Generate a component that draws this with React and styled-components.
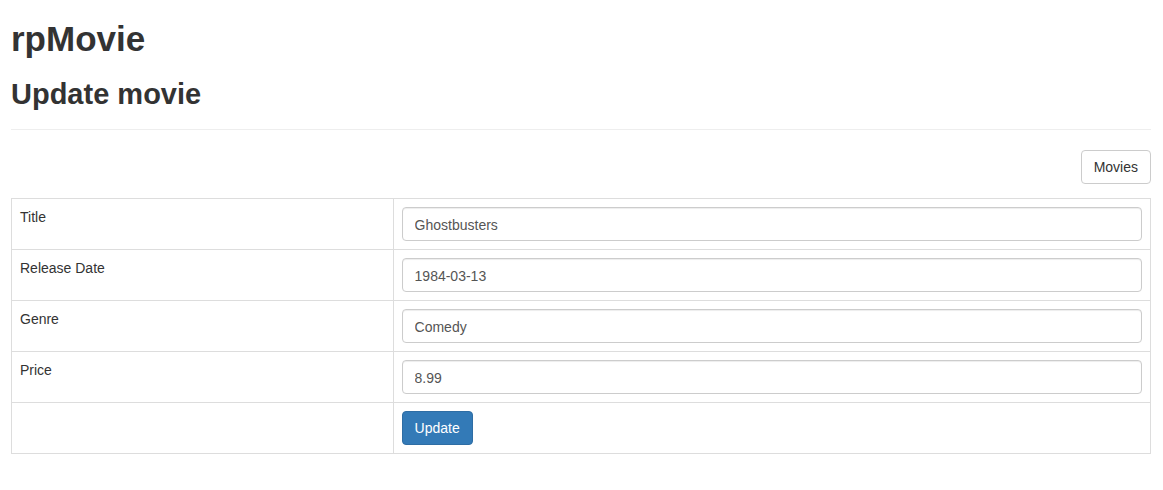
import React from 'react';
import styled, { createGlobalStyle } from 'styled-components';

const GlobalStyle = createGlobalStyle`
  html, body {
    margin: 0;
    padding: 0;
    background: #fff;
  }
  body {
    font-family: "Liberation Sans", Arial, sans-serif;
    font-size: 14px;
    line-height: 1.42857;
    color: #333;
  }
  * { box-sizing: border-box; }
`;

const Page = styled.div`
  padding: 0 12px 0 11px;
  overflow: hidden;
`;

const AppTitle = styled.h1`
  font-size: 35px;
  font-weight: bold;
  line-height: 1.1;
  margin: 20px 0 10px;
  color: #333;
`;

const PageTitle = styled.h2`
  font-size: 29px;
  font-weight: bold;
  line-height: 1.1;
  margin: 20px 0 10px;
  color: #333;
`;

const Rule = styled.hr`
  border: 0;
  border-top: 1px solid #eee;
  margin: 19px 0 20px;
`;

const Toolbar = styled.div`
  display: flex;
  justify-content: flex-end;
  margin-bottom: 14px;
`;

const Button = styled.button`
  display: inline-block;
  height: 34px;
  padding: 7px 12px 5px;
  font-family: inherit;
  font-size: 14px;
  line-height: 1.42857;
  border-radius: 4px;
  cursor: pointer;
  border: 1px solid ${p => (p.$primary ? '#2e6da4' : '#ccc')};
  background: ${p => (p.$primary ? '#337ab7' : '#fff')};
  color: ${p => (p.$primary ? '#fff' : '#333')};
`;

const Table = styled.table`
  width: 100%;
  border-collapse: collapse;
  border: 1px solid #ddd;
`;

const Cell = styled.td`
  padding: 8px;
  border: 1px solid #ddd;
  vertical-align: top;
  line-height: 1.42857;
  width: ${p => p.$width || 'auto'};
`;

const Label = styled.span`
  display: block;
  margin-top: 1px;
`;

const Input = styled.input`
  display: block;
  width: 100%;
  height: 34px;
  padding: 7px 12px 5px;
  font-family: inherit;
  font-size: 14px;
  line-height: 1.42857;
  color: #555;
  background: #fff;
  border: 1px solid #ccc;
  border-radius: 4px;
  box-shadow: inset 0 1px 1px rgba(0, 0, 0, 0.075);
  outline: none;
`;

const fields = [
  { label: 'Title', value: 'Ghostbusters' },
  { label: 'Release Date', value: '1984-03-13' },
  { label: 'Genre', value: 'Comedy' },
  { label: 'Price', value: '8.99' },
];

export default function App() {
  return (
    <>
      <GlobalStyle />
      <Page>
        <AppTitle>rpMovie</AppTitle>
        <PageTitle>Update movie</PageTitle>
        <Rule />
        <Toolbar>
          <Button>Movies</Button>
        </Toolbar>
        <Table>
          <tbody>
            {fields.map(f => (
              <tr key={f.label}>
                <Cell $width="33.5%"><Label>{f.label}</Label></Cell>
                <Cell>
                  <Input type="text" defaultValue={f.value} />
                </Cell>
              </tr>
            ))}
            <tr>
              <Cell $width="33.5%" />
              <Cell>
                <Button $primary>Update</Button>
              </Cell>
            </tr>
          </tbody>
        </Table>
      </Page>
    </>
  );
}
